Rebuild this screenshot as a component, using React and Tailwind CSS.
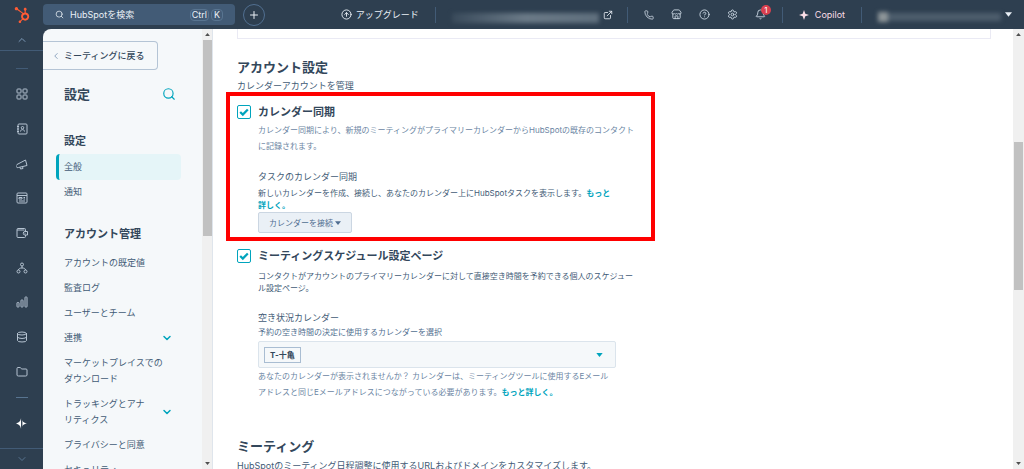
import { useState } from 'react';
import { FaHubspot } from 'react-icons/fa';
import {
  ChevronDown,
  ChevronLeft,
  ChevronUp,
  CircleArrowUp,
  CircleQuestionMark,
  Bell,
  Database,
  ExternalLink,
  Folder,
  Phone,
  Plus,
  Search,
  Settings,
  Store,
} from 'lucide-react';

const railIcons = [
  {
    label: 'ワークスペース',
    shape: (
      <>
        <rect x="2" y="2" width="8" height="8" rx="1.5" />
        <rect x="14" y="2" width="8" height="8" rx="1.5" />
        <rect x="2" y="14" width="8" height="8" rx="1.5" />
        <rect x="14" y="14" width="8" height="8" rx="1.5" />
      </>
    ),
  },
  {
    label: 'CRM',
    shape: (
      <>
        <rect x="4" y="2" width="18" height="20" rx="2" />
        <path d="M2 7h4M2 12h4M2 17h4M9 17c0-5 8-5 8 0" />
        <circle cx="13" cy="9.5" r="2.5" />
      </>
    ),
  },
  {
    label: 'マーケティング',
    shape: (
      <>
        <path d="M2 13 19 4l3 11-17 4a3 3 0 0 1-3-6z" />
        <path d="M8 18.5l1 3.5 5-1-1-4" />
      </>
    ),
  },
  {
    label: 'コンテンツ',
    shape: (
      <>
        <rect x="2" y="2" width="20" height="20" rx="2" />
        <path d="M2 7h20M6 11h6v3H6zM15 11h3M15 14h3M6 18h12" />
      </>
    ),
  },
  {
    label: 'コマース',
    shape: (
      <>
        <path d="M19 9V5a2 2 0 0 0-2-2H4a2 2 0 0 0-2 2v14a2 2 0 0 0 2 2h13a2 2 0 0 0 2-2v-3" />
        <path d="M2 6h15" />
        <path d="M23 9h-5a3.5 3.5 0 0 0 0 7h5zM17 12.5h2" />
      </>
    ),
  },
  {
    label: '自動化',
    shape: (
      <>
        <circle cx="12" cy="5" r="3" />
        <circle cx="5" cy="19" r="3" />
        <circle cx="19" cy="19" r="3" />
        <path d="M12 8v4M5 16c0-3 3-4 7-4s7 1 7 4" />
      </>
    ),
  },
  {
    label: 'レポート',
    shape: (
      <>
        <rect x="2" y="13" width="4" height="9" rx="1" />
        <rect x="10" y="8" width="4" height="14" rx="1" />
        <rect x="18" y="2" width="4" height="20" rx="1" />
      </>
    ),
  },
];

const accountItems = [
  { label: 'アカウントの既定値' },
  { label: '監査ログ' },
  { label: 'ユーザーとチーム' },
  { label: '連携', expandable: true },
  { label: 'マーケットプレイスでのダウンロード' },
  { label: 'トラッキングとアナリティクス', expandable: true },
  { label: 'プライバシーと同意' },
  { label: 'セキュリティ' },
];

function Divider() {
  return <span className="h-4 w-px bg-[#425b76]" />;
}

function Caret({ className }) {
  return (
    <svg viewBox="0 0 8 5" className={className} aria-hidden="true">
      <path d="M0 0h8L4 5z" fill="currentColor" />
    </svg>
  );
}

function IconButton({ label, children }) {
  return (
    <button aria-label={label} className="relative flex size-3 items-center justify-center text-[#cbd6e2]">
      {children}
    </button>
  );
}

function TopBar() {
  return (
    <header className="flex h-[29px] shrink-0 items-center bg-[#2e3f50] text-[9px] text-[#eaf0f6]">
      <a href="#home" aria-label="HubSpot" className="flex w-[43px] justify-center">
        <FaHubspot className="size-4 text-[#ff5c35]" />
      </a>
      <label className="flex h-[21px] w-48 shrink-0 items-center rounded bg-[#425b76] pr-3 pl-3">
        <Search className="mr-1.5 size-[9px] shrink-0" />
        <input
          type="text"
          aria-label="検索"
          placeholder="HubSpotを検索"
          className="w-full min-w-0 bg-transparent outline-none placeholder:text-[#eaf0f6]"
        />
        <kbd className="rounded-sm border border-[#587490] px-px font-[inherit] leading-[10px]">Ctrl</kbd>
        <kbd className="ml-0.5 rounded-sm border border-[#587490] px-0.5 font-[inherit] leading-[10px]">K</kbd>
      </label>
      <button
        aria-label="作成"
        className="ml-2 flex size-[22px] shrink-0 items-center justify-center rounded-full border border-[#516f90]"
      >
        <Plus className="size-3" />
      </button>

      <div className="ml-auto flex items-center pr-3">
        <a href="#upgrade" className="mr-4 flex items-center gap-1 whitespace-nowrap">
          <CircleArrowUp className="size-[11px]" />
          アップグレード
        </a>
        <Divider />
        <a href="#meetings" aria-label="ミーティングリンク" className="mr-3.5 ml-4 flex items-center gap-1">
          <span className="mt-1.5 h-2.5 w-[147px] bg-linear-to-r from-[#3a4b5b] via-[#6b7a87] to-[#5f6f7d] blur-[2px]" />
          <ExternalLink className="size-2.5" />
        </a>
        <Divider />
        <div className="mx-[15px] flex items-center gap-4">
          <IconButton label="電話">
            <Phone className="size-2.5" />
          </IconButton>
          <IconButton label="マーケットプレイス">
            <Store className="size-[11px]" />
          </IconButton>
          <IconButton label="ヘルプ">
            <CircleQuestionMark className="size-[11px]" />
          </IconButton>
          <IconButton label="設定">
            <Settings className="size-[11px]" />
          </IconButton>
          <IconButton label="通知">
            <Bell className="size-[11px]" />
            <span className="absolute -top-1 left-1.5 flex size-[10px] items-center justify-center rounded-full bg-[#d9404f] text-[8px] leading-none text-white">
              1
            </span>
          </IconButton>
        </div>
        <Divider />
        <button className="mx-4 flex items-center gap-1.5 text-[#fbdde6]">
          <svg viewBox="0 0 20 20" className="size-2.5" aria-hidden="true">
            <path d="M10 0l2.6 7.4L20 10l-7.4 2.6L10 20l-2.6-7.4L0 10l7.4-2.6z" fill="currentColor" />
          </svg>
          Copilot
        </button>
        <Divider />
        <button aria-label="アカウント" className="ml-4 flex items-center gap-1">
          <span className="flex items-center blur-[2px]">
            <span className="mt-1 size-2.5 bg-[#8e9699]" />
            <span className="mt-1 h-2 w-[113px] bg-[#4d5d6c]" />
          </span>
          <Caret className="h-[5px] w-[7px]" />
        </button>
      </div>
    </header>
  );
}

function Rail() {
  return (
    <nav aria-label="メイン" className="flex w-[43px] shrink-0 flex-col items-center text-[#b5c3d1]">
      <button aria-label="上へ" className="flex h-[22px] w-full items-center justify-center border-b border-[#425b76]">
        <ChevronUp className="size-3 text-[#7c98b6]" />
      </button>
      <span className="mt-[17px] h-px w-3 bg-[#425b76]" />
      <ul className="mt-2 flex flex-1 flex-col">
        {railIcons.map((item) => (
          <li key={item.label} className="flex flex-1 items-center">
            <a href="#menu" aria-label={item.label}>
              <svg
                viewBox="0 0 24 24"
                className="size-3"
                fill="none"
                stroke="currentColor"
                strokeWidth="2"
                strokeLinejoin="round"
              >
                {item.shape}
              </svg>
            </a>
          </li>
        ))}
        <li className="flex flex-1 items-center">
          <a href="#data" aria-label="データ管理">
            <Database className="size-3" />
          </a>
        </li>
        <li className="flex flex-1 items-center">
          <a href="#library" aria-label="ライブラリー">
            <Folder className="size-3" />
          </a>
        </li>
      </ul>
      <span className="mt-2 h-px w-3 bg-[#587490]" />
      <a href="#breeze" aria-label="Breeze" className="mt-5 mb-[19px] text-white">
        <svg viewBox="0 0 24 24" className="size-[11px]" fill="currentColor" aria-hidden="true">
          <path d="M11 0v24c-1-6-3-9.5-11-12 8-2.5 10-6 11-12z" />
          <path d="M14 4v16c.6-4.5 2.5-6.5 10-8-7.500-1.500-9.400-3.500-10-8z" />
        </svg>
      </a>
      <button aria-label="下へ" className="flex h-[21px] w-full items-center justify-center border-t border-[#425b76]">
        <ChevronDown className="size-3 text-[#587490]" />
      </button>
    </nav>
  );
}

function ScrollTrack({ className, thumb }) {
  return (
    <div className={`flex shrink-0 flex-col items-center bg-[#f0f0f0] text-[#505050] ${className}`} aria-hidden="true">
      <Caret className="my-1 h-[3px] w-[5px] rotate-180" />
      <span className={`w-[9px] bg-[#c1c1c1] ${thumb}`} />
      <Caret className="mt-auto mb-1 h-[3px] w-[5px]" />
    </div>
  );
}

function Sidebar() {
  return (
    <aside className="flex w-[170px] shrink-0 overflow-hidden rounded-tl-lg border-r border-[#dfe5ec] bg-[#f5f8fa]">
      <div className="min-w-0 flex-1 overflow-hidden pt-3 text-[9px] leading-4">
        <a
          href="#back"
          className="flex h-[29px] w-[115px] items-center rounded-r-sm border border-l-0 border-[#b4c4d5] pl-2 font-medium text-[#33475b]"
        >
          <ChevronLeft className="mr-[3px] size-2.5 text-[#7c98b6]" />
          ミーティングに戻る
        </a>
        <div className="mt-3.5 flex h-5 items-center justify-between pr-[26px] pl-[21px]">
          <h1 className="text-[13px] font-bold">設定</h1>
          <button aria-label="設定を検索" className="text-[#00a4bd]">
            <Search className="size-3.5" />
          </button>
        </div>

        <h2 className="mt-[29px] pl-[21px] text-[11px] font-bold">設定</h2>
        <ul className="mt-[5px] pr-[21px] pl-[13px] text-[#425b76]">
          <li>
            <a href="#general" className="block rounded-sm border-l-3 border-[#00a4bd] bg-[#e5f5f8] py-[5px] pl-[5px]">
              全般
            </a>
          </li>
          <li>
            <a href="#notifications" className="block pt-1 pb-[5px] pl-2">
              通知
            </a>
          </li>
        </ul>

        <h2 className="mt-[21px] pl-[21px] text-[11px] font-bold">アカウント管理</h2>
        <ul className="mt-2 pr-[29px] pl-[21px] text-[#425b76]">
          {accountItems.map((item) => (
            <li key={item.label}>
              <a href="#item" className="flex items-center justify-between pt-[5px] pb-1">
                <span className={item.expandable ? 'w-[84px]' : 'w-[104px]'}>{item.label}</span>
                {item.expandable && <ChevronDown className="size-3 stroke-3 text-[#00a4bd]" />}
              </a>
            </li>
          ))}
        </ul>
      </div>
      <ScrollTrack className="w-2.5" thumb="h-[196px]" />
    </aside>
  );
}

function CheckRow({ label, checked, onChange }) {
  return (
    <label className="flex h-4 items-center text-[11px] font-bold text-[#33475b]">
      <span className="relative mr-[7px] flex size-3.5">
        <input
          type="checkbox"
          checked={checked}
          onChange={(e) => onChange(e.target.checked)}
          className="peer size-3.5 appearance-none rounded-xs border border-[#00a4bd] bg-white"
        />
        <svg
          viewBox="0 0 14 14"
          className="pointer-events-none absolute inset-0 hidden text-[#00a4bd] peer-checked:block"
          fill="none"
          stroke="currentColor"
          strokeWidth="2.2"
        >
          <path d="M3.2 7l2.6 2.6 5-5.2" />
        </svg>
      </span>
      {label}
    </label>
  );
}

function MoreLink({ children }) {
  return (
    <a href="#more" className="font-bold text-[#00a4bd]">
      {children}
    </a>
  );
}

export default function App() {
  const [syncOn, setSyncOn] = useState(true);
  const [pageOn, setPageOn] = useState(true);

  return (
    <div
      lang="ja"
      className="flex h-screen flex-col overflow-hidden bg-[#2e3f50] font-['Inter','Noto_Sans_CJK_JP',sans-serif] text-[#33475b]"
    >
      <TopBar />
      <div className="flex min-h-0 flex-1">
        <Rail />
        <Sidebar />
        <main className="min-w-0 flex-1 overflow-hidden bg-white pr-[22px] pl-6 text-[9px] leading-4 text-[#425b76]">
          <div className="h-2.5 border border-t-0 border-[#eaeaf4]" />

          <h2 className="mt-[18px] text-[13px] leading-5 font-bold text-[#33475b]">アカウント設定</h2>
          <p className="mt-px">カレンダーアカウントを管理</p>

          <section className="relative mt-2.5 max-w-[404px]">
            <div className="pointer-events-none absolute -top-3 -right-[14px] -bottom-2 -left-[11px] border-4 border-[#ff0000]" />
            <CheckRow label="カレンダー同期" checked={syncOn} onChange={setSyncOn} />
            <div className="pl-[21px] text-[8px]">
              <p className="mt-0.5 text-[#6b85a3]">
                カレンダー同期により、新規のミーティングがプライマリーカレンダーからHubSpotの既存のコンタクト
                <br />
                に記録されます。
              </p>
              <h3 className="mt-[15px] text-[9px]">タスクのカレンダー同期</h3>
              <p className="mt-0.5 leading-3">
                新しいカレンダーを作成、接続し、あなたのカレンダー上にHubSpotタスクを表示します。
                <MoreLink>
                  もっと
                  <br />
                  詳しく。
                </MoreLink>
              </p>
              <button className="mt-px flex h-[21px] items-center gap-0.5 rounded-xs border border-[#cbd6e2] bg-[#eaf0f6] px-2.5 text-[#506e91]">
                カレンダーを接続
                <Caret className="h-1 w-1.5" />
              </button>
            </div>
          </section>

          <section className="mt-[15px] max-w-[404px]">
            <CheckRow label="ミーティングスケジュール設定ページ" checked={pageOn} onChange={setPageOn} />
            <div className="pl-[21px] text-[8px]">
              <p className="mt-1.5 leading-3">
                コンタクトがアカウントのプライマリーカレンダーに対して直接空き時間を予約できる個人のスケジュー
                <br />
                ル設定ページ。
              </p>
              <h3 id="availability" className="mt-4 text-[9px]">
                空き状況カレンダー
              </h3>
              <p className="leading-3 text-[#516f90]">予約の空き時間の決定に使用するカレンダーを選択</p>
              <button
                aria-labelledby="availability"
                className="mt-[3px] flex h-[27px] w-[358px] items-center justify-between rounded-xs border border-[#dbe4ec] bg-[#f5f8fa] pr-3 pl-[5px]"
              >
                <span className="border border-[#a9bdd2] px-[5px] leading-[14px] font-bold text-[#33475b]">T-十亀</span>
                <Caret className="h-1 w-[7px] text-[#00a4bd]" />
              </button>
              <p className="text-[#6b85a3]">
                あなたのカレンダーが表示されませんか？ カレンダーは、ミーティングツールに使用するEメール
                <br />
                アドレスと同じEメールアドレスにつながっている必要があります。
                <MoreLink>もっと詳しく。</MoreLink>
              </p>
            </div>
          </section>

          <h2 className="mt-9 text-[13px] leading-5 font-bold text-[#33475b]">ミーティング</h2>
          <p className="mt-0.5">HubSpotのミーティング日程調整に使用するURLおよびドメインをカスタマイズします。</p>
        </main>
        <ScrollTrack className="w-[11px]" thumb="mt-[102px] h-[148px]" />
      </div>
    </div>
  );
}
